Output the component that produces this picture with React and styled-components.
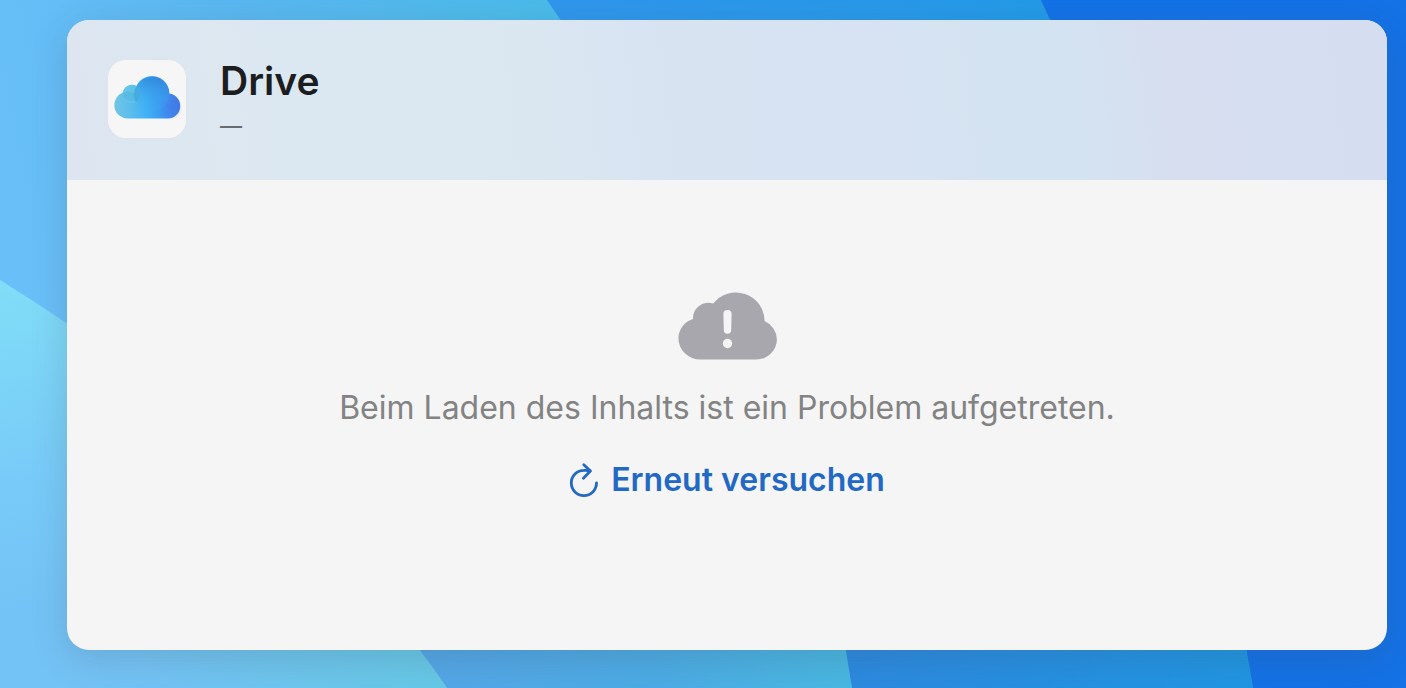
import React from 'react';
import styled, { createGlobalStyle } from 'styled-components';

const GlobalStyle = createGlobalStyle`
  * {
    box-sizing: border-box;
  }
  body {
    margin: 0;
    background: #1070e4;
    font-family: Inter, "Liberation Sans", sans-serif;
  }
`;

const Page = styled.main`
  position: relative;
  isolation: isolate;
  display: flex;
  min-height: 100vh;
  padding: 20px 19px 38px 67px;
`;

const Backdrop = styled.svg`
  position: absolute;
  inset: 0;
  z-index: -1;
  width: 100%;
  height: 100%;
`;

const Card = styled.section`
  flex: 1;
  display: flex;
  flex-direction: column;
  border-radius: 22px;
  overflow: hidden;
  background: #f5f5f5;
  box-shadow: 0 10px 36px rgba(60, 70, 90, 0.2);
`;

const CardHeader = styled.header`
  display: flex;
  align-items: flex-start;
  gap: 34px;
  min-height: 160px;
  padding: 40px 41px 20px;
  background: linear-gradient(
    84deg,
    #dde6f0 0%,
    #dce8f1 18%,
    #dae7f1 36%,
    #d8e3f2 46%,
    #d7e3f2 62%,
    #d4e3f1 70%,
    #d4e3f1 76%,
    #d6def0 83%,
    #d5ddf1 100%
  );
`;

const AppTile = styled.div`
  flex: none;
  width: 78px;
  height: 78px;
  border-radius: 18px;
  background: #f6f6f7;
  box-shadow: 0 0 1px 1px rgba(226, 226, 236, 0.8);
`;

const Titles = styled.div`
  display: flex;
  flex-direction: column;
`;

const Title = styled.h1`
  margin: 0;
  font-size: 39px;
  font-weight: 600;
  line-height: 42px;
  color: #1b1d20;
`;

const Subtitle = styled.p`
  margin: 0;
  font-size: 22px;
  font-weight: 500;
  line-height: 48px;
  color: #686b72;
`;

const CardBody = styled.div`
  flex: 1;
  display: flex;
  flex-direction: column;
  align-items: center;
  justify-content: center;
  padding: 0 40px 40px;
`;

const Message = styled.p`
  margin: 28px 0 32px;
  font-size: 32px;
  line-height: 40px;
  text-align: center;
  color: #838384;
`;

const RetryButton = styled.button`
  display: flex;
  align-items: center;
  gap: 12px;
  padding: 0;
  border: 0;
  background: none;
  font: inherit;
  font-size: 32px;
  font-weight: 600;
  line-height: 40px;
  color: #2169c4;
  cursor: pointer;
`;

function Wallpaper() {
  return (
    <Backdrop viewBox="0 0 1406 688" preserveAspectRatio="none" aria-hidden="true">
      <defs>
        <linearGradient id="aqua" gradientUnits="userSpaceOnUse" x1="0" y1="290" x2="60" y2="600">
          <stop offset="0" stopColor="#80dcf7" />
          <stop offset="0.6" stopColor="#78cbf8" />
          <stop offset="1" stopColor="#74c3f6" />
        </linearGradient>
        <linearGradient id="aquaEdge" x1="0" x2="1" y1="0" y2="0">
          <stop offset="0.3" stopColor="#66c9e6" stopOpacity="0" />
          <stop offset="1" stopColor="#66c9e6" />
        </linearGradient>
        <linearGradient id="sky" gradientUnits="userSpaceOnUse" x1="0" y1="160" x2="740" y2="0">
          <stop offset="0" stopColor="#69c0f9" />
          <stop offset="0.35" stopColor="#5ab7f0" />
          <stop offset="0.75" stopColor="#4abbe9" />
          <stop offset="1" stopColor="#4ab8ea" />
        </linearGradient>
        <linearGradient id="skyLow" gradientUnits="userSpaceOnUse" x1="420" y1="0" x2="850" y2="0">
          <stop offset="0" stopColor="#54a7e7" />
          <stop offset="0.55" stopColor="#4cace5" />
          <stop offset="1" stopColor="#48b8e2" />
        </linearGradient>
        <linearGradient id="azure" gradientUnits="userSpaceOnUse" x1="550" y1="0" x2="1250" y2="0">
          <stop offset="0" stopColor="#3096ec" />
          <stop offset="0.68" stopColor="#249ae7" />
          <stop offset="1" stopColor="#2097e4" />
        </linearGradient>
        <linearGradient id="azureLow" gradientUnits="userSpaceOnUse" x1="850" y1="0" x2="1250" y2="0">
          <stop offset="0" stopColor="#2c8ae0" />
          <stop offset="1" stopColor="#2096e3" />
        </linearGradient>
        <linearGradient id="royal" x1="0" x2="1" y1="0" y2="0">
          <stop offset="0" stopColor="#0f72e6" />
          <stop offset="1" stopColor="#1472e6" />
        </linearGradient>
      </defs>
      <rect width="1406" height="688" fill="url(#royal)" />
      <path d="M0 0H1041Q1195 330 1253 688H0Z" fill="url(#azure)" />
      <path d="M600 400H1200L1253 688H600Z" fill="url(#azureLow)" />
      <path d="M0 0H547Q775 330 852 688H0Z" fill="url(#sky)" />
      <path d="M200 400H783Q830 540 852 688H200Z" fill="url(#skyLow)" />
      <path d="M0 280Q290 460 447 688H0Z" fill="url(#aqua)" />
      <path d="M0 280Q290 460 447 688H0Z" fill="url(#aquaEdge)" />
    </Backdrop>
  );
}

function DriveCloud() {
  return (
    <svg width="78" height="78" viewBox="0 0 78 78" aria-hidden="true">
      <defs>
        <linearGradient id="cloudBody" gradientUnits="userSpaceOnUse" x1="6" y1="48" x2="72" y2="44">
          <stop offset="0" stopColor="#72c6e4" />
          <stop offset="0.25" stopColor="#5bbdec" />
          <stop offset="0.5" stopColor="#3eb0f6" />
          <stop offset="0.75" stopColor="#3d93ef" />
          <stop offset="1" stopColor="#4178e4" />
        </linearGradient>
        <linearGradient id="cloudTop" x1="0.6" y1="0" x2="0.35" y2="1">
          <stop offset="0" stopColor="#3188dc" />
          <stop offset="1" stopColor="#3fb3f8" stopOpacity="0" />
        </linearGradient>
        <radialGradient id="cloudRight">
          <stop offset="0" stopColor="#4a6cec" stopOpacity="0.35" />
          <stop offset="1" stopColor="#4178ea" stopOpacity="0" />
        </radialGradient>
      </defs>
      <path
        d="M20 58.5A13.4 13.4 0 0 1 14.8 32.6A9.3 9.3 0 0 1 28.4 25.9A17.3 17.3 0 0 1 61.3 33.6A12.5 12.5 0 0 1 59.5 58.5Z"
        fill="url(#cloudBody)"
      />
      <circle cx="44" cy="34.3" r="17.3" fill="url(#cloudTop)" />
      <circle cx="63" cy="48" r="12" fill="url(#cloudRight)" />
      <circle cx="24" cy="34" r="9.3" fill="#6ccae4" fillOpacity="0.5" />
      <path d="M28.4 25.9A9.3 9.3 0 0 1 27.6 42.4A17.3 17.3 0 0 1 28.4 25.9Z" fill="#2b97d3" fillOpacity="0.4" />
      <path d="M15 33A13.5 13.5 0 0 1 31 37A9.3 9.3 0 0 1 15 36Z" fill="#3da9dc" fillOpacity="0.3" />
    </svg>
  );
}

function CloudAlert() {
  return (
    <svg width="99" height="69" viewBox="0 0 99 69" aria-hidden="true">
      <path
        d="M22.5 68.5A21.8 21.3 0 0 1 0.4 47.2A20.6 20.6 0 0 1 15 28A15.3 15.3 0 0 1 35.2 12.6A28.7 28.7 0 0 1 86.6 30A20.5 20.5 0 0 1 98.9 48.4A20.4 20.1 0 0 1 78.5 68.5Z"
        fill="#a8a7ad"
      />
      <path
        d="M45.4 23.2A4.1 4.1 0 0 1 53.6 23.2L53.2 39A3.7 3.7 0 0 1 45.8 39Z"
        fill="#f5f5f5"
      />
      <circle cx="49.5" cy="52.5" r="4.7" fill="#f5f5f5" />
    </svg>
  );
}

function RetryIcon() {
  return (
    <svg
      width="30"
      height="36"
      viewBox="0 0 30 36"
      fill="none"
      stroke="currentColor"
      strokeWidth="2.8"
      strokeLinecap="round"
      strokeLinejoin="round"
      aria-hidden="true"
    >
      <path d="M27.5 21A12.6 12.6 0 1 1 14.9 8.4Q18.5 8.2 21 8.8" />
      <path d="M14.8 2.7L21.4 9L14.4 16.2" />
    </svg>
  );
}

export default function App() {
  return (
    <>
      <GlobalStyle />
      <Page>
        <Wallpaper />
        <Card>
          <CardHeader>
            <AppTile>
              <DriveCloud />
            </AppTile>
            <Titles>
              <Title>Drive</Title>
              <Subtitle>—</Subtitle>
            </Titles>
          </CardHeader>
          <CardBody>
            <CloudAlert />
            <Message>Beim Laden des Inhalts ist ein Problem aufgetreten.</Message>
            <RetryButton type="button">
              <RetryIcon />
              Erneut versuchen
            </RetryButton>
          </CardBody>
        </Card>
      </Page>
    </>
  );
}
